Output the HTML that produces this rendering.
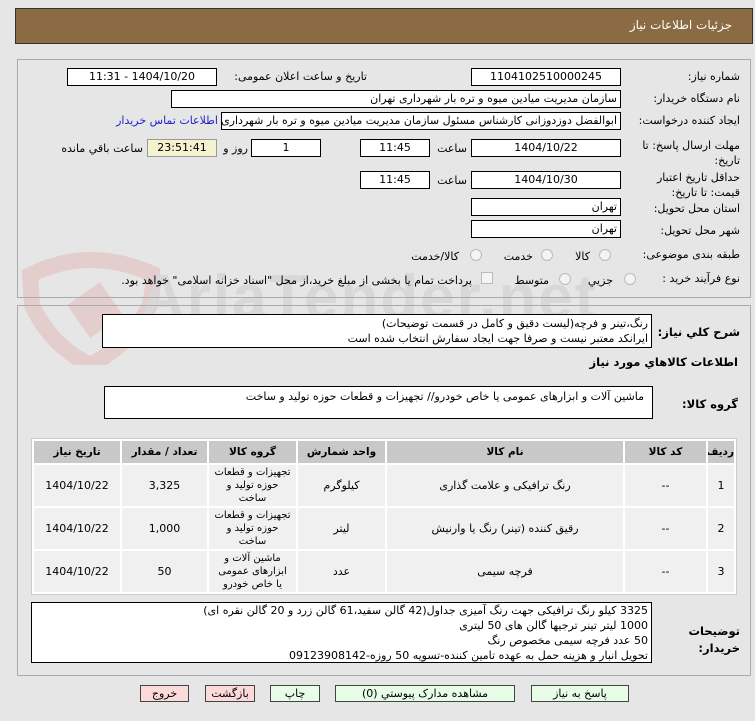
<!DOCTYPE html>
<html><head><meta charset="utf-8"><style>
*{margin:0;padding:0;box-sizing:border-box}
body{width:755px;height:721px;background:#e6e6e6;font-family:"DejaVu Sans","Liberation Sans",sans-serif;font-size:11px;color:#000;position:relative;overflow:hidden}
.a{position:absolute;white-space:nowrap}
.box{position:absolute;background:#fff;border:1px solid #000;direction:rtl;padding:0 3px;line-height:16px;white-space:nowrap;overflow:hidden}
.c{text-align:center}
.lbl{position:absolute;direction:rtl;text-align:right;white-space:nowrap}
.panel{position:absolute;border:1px solid #aaa}
.rad{position:absolute;width:12px;height:12px;border:1px solid #bbb;border-radius:50%;background:#f4f4f4}
table{position:absolute;left:31px;top:438px;width:706px;border-collapse:separate;border-spacing:2px;background:#fff;border:1px solid #ccc;direction:rtl;table-layout:fixed}
td,th{text-align:center;font-size:11px;overflow:hidden}
th{background:#c8c8c8;height:22px;font-weight:bold;font-size:10.5px}
td{background:#f0f0f0;height:41px;line-height:13px}
td.g{font-size:10px;line-height:13px}
.btn{position:absolute;top:685px;height:17px;border:1px solid #444;text-align:center;line-height:15px;font-size:11px;direction:rtl}
</style></head><body>
<div class="a" style="left:15px;top:8px;width:738px;height:36px;background:#8b6b43;border:1px solid #333"></div>
<div class="lbl" style="right:23px;top:18px;color:#fff;font-size:12px">جزئیات اطلاعات نیاز</div>

<!-- watermark -->
<div class="a" style="left:20px;top:245px;opacity:0.55">
<svg width="140" height="120" viewBox="0 0 140 120"><path d="M10 30 Q70 0 135 30 L130 60 Q110 100 70 120 Q30 100 12 60 Z" fill="none" stroke="#e3b9b9" stroke-width="16"/><rect x="55" y="45" width="40" height="40" fill="#e3b9b9" transform="rotate(-35 75 65)"/></svg></div>
<div class="a" style="left:140px;top:262px;font-size:62px;font-weight:bold;color:#d8d8d8;letter-spacing:2px;font-family:'Liberation Sans',sans-serif">AriaTender.net</div>

<div class="panel" style="left:17px;top:59px;width:734px;height:239px"></div>
<div class="lbl" style="right:15px;top:70px">شماره نیاز:</div>
<div class="box c" style="left:471px;top:68px;width:150px;height:18px">1104102510000245</div>
<div class="lbl" style="right:388px;top:70px">تاریخ و ساعت اعلان عمومی:</div>
<div class="box c" style="left:67px;top:68px;width:150px;height:18px">1404/10/20 - 11:31</div>

<div class="lbl" style="right:15px;top:92px">نام دستگاه خریدار:</div>
<div class="box" style="left:171px;top:90px;width:450px;height:18px">سازمان مدیریت میادین میوه و تره بار شهرداری تهران</div>

<div class="lbl" style="right:15px;top:114px">ایجاد کننده درخواست:</div>
<div class="box" style="left:221px;top:112px;width:400px;height:18px">ابوالفضل دوزدوزانی کارشناس مسئول سازمان مدیریت میادین میوه و تره بار شهرداری تهران</div>
<div class="lbl" style="right:537px;top:114px;color:#2222cc">اطلاعات تماس خریدار</div>

<div class="lbl" style="right:15px;top:138px;line-height:15px">مهلت ارسال پاسخ: تا<br>تاریخ:</div>
<div class="box c" style="left:471px;top:139px;width:150px;height:18px">1404/10/22</div>
<div class="lbl" style="right:288px;top:142px">ساعت</div>
<div class="box c" style="left:360px;top:139px;width:70px;height:18px">11:45</div>
<div class="box c" style="left:251px;top:139px;width:70px;height:18px">1</div>
<div class="lbl" style="right:507px;top:142px">روز و</div>
<div class="box c" style="left:147px;top:139px;width:70px;height:18px;background:#f5f2d0;border-color:#999">23:51:41</div>
<div class="lbl" style="right:612px;top:142px">ساعت باقي مانده</div>

<div class="lbl" style="right:15px;top:170px;line-height:15px">حداقل تاریخ اعتبار<br>قیمت: تا تاریخ:</div>
<div class="box c" style="left:471px;top:171px;width:150px;height:18px">1404/10/30</div>
<div class="lbl" style="right:288px;top:174px">ساعت</div>
<div class="box c" style="left:360px;top:171px;width:70px;height:18px">11:45</div>

<div class="lbl" style="right:15px;top:202px">استان محل تحویل:</div>
<div class="box" style="left:471px;top:198px;width:150px;height:18px">تهران</div>
<div class="lbl" style="right:15px;top:224px">شهر محل تحویل:</div>
<div class="box" style="left:471px;top:220px;width:150px;height:18px">تهران</div>

<div class="lbl" style="right:15px;top:248px">طبقه بندی موضوعی:</div>
<div class="rad" style="left:599px;top:249px"></div><div class="lbl" style="right:165px;top:250px">کالا</div>
<div class="rad" style="left:541px;top:249px"></div><div class="lbl" style="right:222px;top:250px">خدمت</div>
<div class="rad" style="left:470px;top:249px"></div><div class="lbl" style="right:296px;top:250px">کالا/خدمت</div>

<div class="lbl" style="right:15px;top:272px">نوع فرآیند خرید :</div>
<div class="rad" style="left:624px;top:273px"></div><div class="lbl" style="right:142px;top:274px">جزیي</div>
<div class="rad" style="left:559px;top:273px"></div><div class="lbl" style="right:206px;top:274px">متوسط</div>
<div class="a" style="left:481px;top:272px;width:12px;height:12px;border:1px solid #bbb;background:#f4f4f4"></div>
<div class="lbl" style="right:283px;top:274px">پرداخت تمام یا بخشی از مبلغ خرید،از محل "اسناد خزانه اسلامی" خواهد بود.</div>

<div class="panel" style="left:17px;top:305px;width:734px;height:371px"></div>
<div class="lbl" style="right:15px;top:325px;font-weight:bold;font-size:11.5px">شرح کلي نیاز:</div>
<div class="box" style="left:102px;top:314px;width:550px;height:34px;line-height:15px;padding-top:1px">رنگ،تینر و فرچه(لیست دقیق و کامل در قسمت توضیحات)<br>ایرانکد معتبر نیست و صرفا جهت ایجاد سفارش انتخاب شده است</div>
<div class="lbl" style="right:17px;top:355px;font-weight:bold;font-size:11.5px">اطلاعات کالاهاي مورد نیاز</div>
<div class="lbl" style="right:17px;top:397px;font-weight:bold;font-size:11.5px">گروه کالا:</div>
<div class="box" style="left:104px;top:386px;width:549px;height:33px;padding-right:8px;padding-top:2px">ماشین آلات و ابزارهای عمومی یا خاص خودرو// تجهیزات و قطعات حوزه تولید و ساخت</div>

<table>
<colgroup><col style="width:26px"><col style="width:81px"><col style="width:236px"><col style="width:87px"><col style="width:87px"><col style="width:85px"><col></colgroup>
<tr><th>ردیف</th><th>کد کالا</th><th>نام کالا</th><th>واحد شمارش</th><th>گروه کالا</th><th>تعداد / مقدار</th><th>تاریخ نیاز</th></tr>
<tr><td>1</td><td>--</td><td>رنگ ترافیکی و علامت گذاری</td><td>کیلوگرم</td><td class="g">تجهیزات و قطعات<br>حوزه تولید و<br>ساخت</td><td>3,325</td><td>1404/10/22</td></tr>
<tr><td>2</td><td>--</td><td>رقیق کننده (تینر) رنگ یا وارنیش</td><td>لیتر</td><td class="g">تجهیزات و قطعات<br>حوزه تولید و<br>ساخت</td><td>1,000</td><td>1404/10/22</td></tr>
<tr><td>3</td><td>--</td><td>فرچه سیمی</td><td>عدد</td><td class="g">ماشین آلات و<br>ابزارهای عمومی<br>یا خاص خودرو</td><td>50</td><td>1404/10/22</td></tr>
</table>

<div class="lbl" style="right:15px;top:623px;font-weight:bold;font-size:11.5px;line-height:17px">توضیحات<br>خریدار:</div>
<div class="box" style="left:31px;top:602px;width:621px;height:61px;line-height:15px;padding-top:0">3325 کیلو رنگ ترافیکی جهت رنگ آمیزی جداول(42 گالن سفید،61 گالن زرد و 20 گالن نقره ای)<br>1000 لیتر تینر ترجیها گالن های 50 لیتری<br>50 عدد فرچه سیمی مخصوص رنگ<br>تحویل انبار و هزینه حمل به عهده تامین کننده-تسویه 50 روزه-09123908142</div>

<div class="btn" style="left:531px;width:98px;background:#e8fde8">پاسخ به نیاز</div>
<div class="btn" style="left:335px;width:180px;background:#e8fde8">مشاهده مدارک پیوستي (0)</div>
<div class="btn" style="left:270px;width:50px;background:#e8fde8">چاپ</div>
<div class="btn" style="left:205px;width:50px;background:#fddada">بازگشت</div>
<div class="btn" style="left:140px;width:49px;background:#fddada">خروج</div>
</body></html>
